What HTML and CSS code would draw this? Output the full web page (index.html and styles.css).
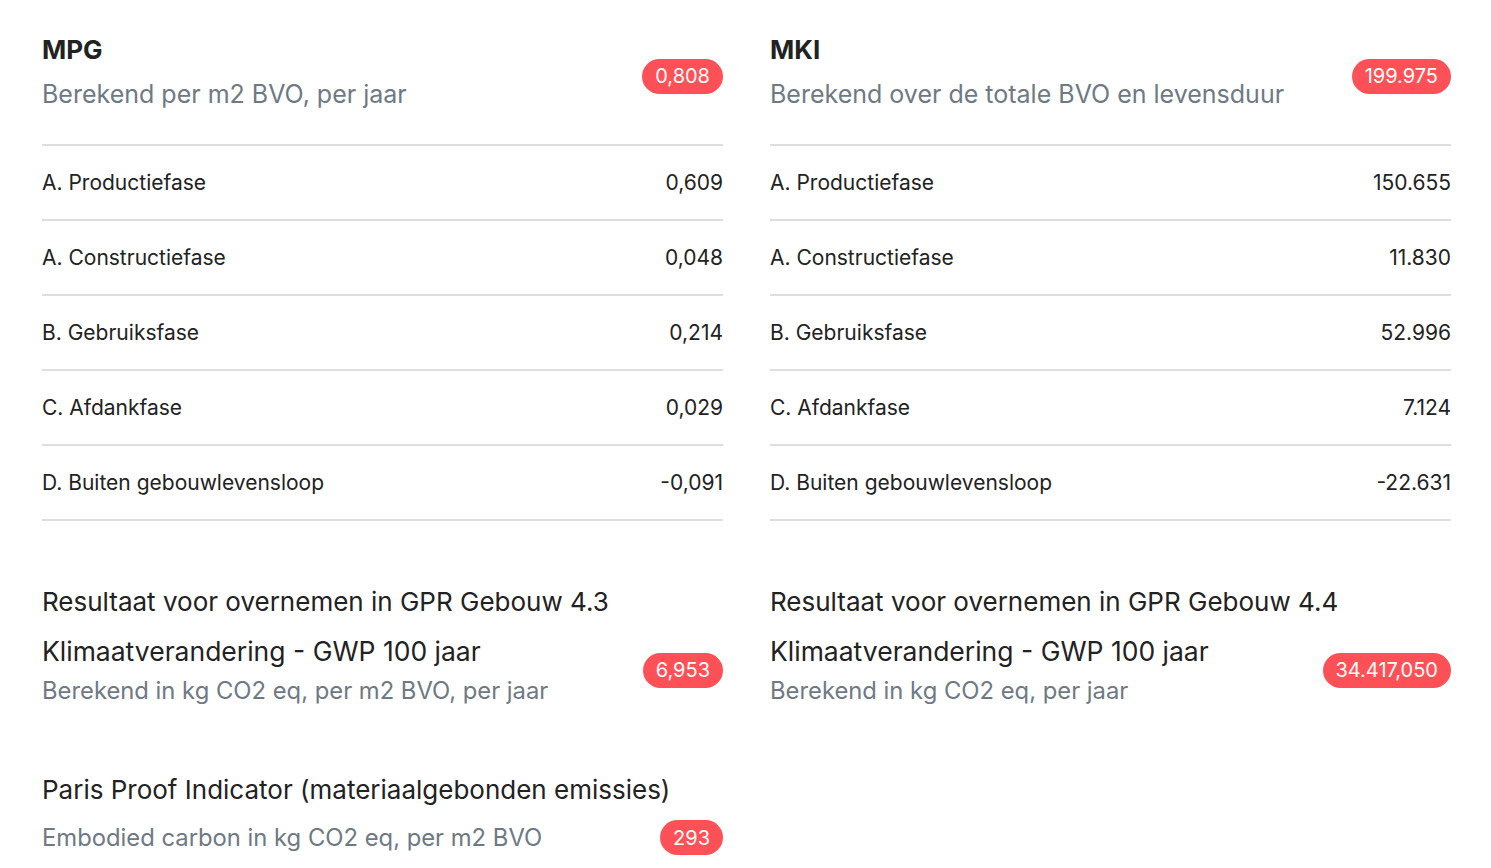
FILE: index.html
```html
<!DOCTYPE html>
<html lang="nl">
<head>
<meta charset="utf-8">
<title>MPG / MKI</title>
<link rel="stylesheet" href="styles.css">
</head>
<body>
<div class="page">
  <section class="col">
    <div class="head">
      <div class="head-text">
        <h2 class="title">MPG</h2>
        <p class="sub">Berekend per m2 BVO, per jaar</p>
      </div>
      <span class="badge">0,808</span>
    </div>
    <div class="table">
      <div class="row"><span>A. Productiefase</span><span>0,609</span></div>
      <div class="row"><span>A. Constructiefase</span><span>0,048</span></div>
      <div class="row"><span>B. Gebruiksfase</span><span>0,214</span></div>
      <div class="row"><span>C. Afdankfase</span><span>0,029</span></div>
      <div class="row"><span>D. Buiten gebouwlevensloop</span><span>-0,091</span></div>
    </div>
    <h3 class="sec-title">Resultaat voor overnemen in GPR Gebouw 4.3</h3>
    <div class="result">
      <div class="result-text">
        <div class="r-title">Klimaatverandering - GWP 100 jaar</div>
        <div class="r-sub">Berekend in kg CO2 eq, per m2 BVO, per jaar</div>
      </div>
      <span class="badge">6,953</span>
    </div>
    <div class="paris">
      <div class="r-title">Paris Proof Indicator (materiaalgebonden emissies)</div>
      <div class="paris-row">
        <div class="r-sub">Embodied carbon in kg CO2 eq, per m2 BVO</div>
        <span class="badge">293</span>
      </div>
    </div>
  </section>
  <section class="col">
    <div class="head">
      <div class="head-text">
        <h2 class="title">MKI</h2>
        <p class="sub">Berekend over de totale BVO en levensduur</p>
      </div>
      <span class="badge">199.975</span>
    </div>
    <div class="table">
      <div class="row"><span>A. Productiefase</span><span>150.655</span></div>
      <div class="row"><span>A. Constructiefase</span><span>11.830</span></div>
      <div class="row"><span>B. Gebruiksfase</span><span>52.996</span></div>
      <div class="row"><span>C. Afdankfase</span><span>7.124</span></div>
      <div class="row"><span>D. Buiten gebouwlevensloop</span><span>-22.631</span></div>
    </div>
    <h3 class="sec-title">Resultaat voor overnemen in GPR Gebouw 4.4</h3>
    <div class="result">
      <div class="result-text">
        <div class="r-title">Klimaatverandering - GWP 100 jaar</div>
        <div class="r-sub">Berekend in kg CO2 eq, per jaar</div>
      </div>
      <span class="badge">34.417,050</span>
    </div>
  </section>
</div>
</body>
</html>
```

FILE: styles.css
```css
* { box-sizing: border-box; }
html, body { margin: 0; padding: 0; background: #fff; }
body {
  font-family: Inter, "Noto Sans", sans-serif;
  color: #222;
}
.page {
  display: grid;
  grid-template-columns: 681px 681px;
  column-gap: 47px;
  padding: 34px 41px 0 42px;
}
.col { display: flex; flex-direction: column; }
.head {
  display: flex;
  align-items: center;
  justify-content: space-between;
  padding-bottom: 34px;
}
.title {
  margin: 0;
  font-size: 26px;
  line-height: 32px;
  font-weight: 700;
  color: #222;
}
.sub {
  margin: 12px 0 0;
  font-size: 25px;
  line-height: 32px;
  color: #6e7984;
}
.badge {
  display: inline-flex;
  align-items: center;
  justify-content: center;
  height: 35px;
  padding: 0 13px;
  border-radius: 18px;
  background: #fd5157;
  color: #fff;
  font-size: 20px;
  line-height: 1;
  white-space: nowrap;
  margin-top: 8px;
}
.table { border-top: 2px solid #dedede; }
.row {
  display: flex;
  justify-content: space-between;
  align-items: center;
  height: 75px;
  padding-bottom: 1px;
  border-bottom: 2px solid #dedede;
  font-size: 21px;
}
.sec-title {
  margin: 65px 0 0;
  font-size: 26px;
  line-height: 32px;
  font-weight: 400;
}
.result {
  display: flex;
  align-items: center;
  justify-content: space-between;
  margin-top: 17px;
}
.r-title {
  font-size: 26px;
  line-height: 32px;
}
.result .r-title { font-size: 26.5px; }
.r-sub {
  margin-top: 8px;
  font-size: 23.8px;
  line-height: 32px;
  color: #6e7984;
}
.result .badge { margin-top: -2px; }
.paris { margin-top: 67px; }
.paris-row {
  display: flex;
  align-items: center;
  justify-content: space-between;
  margin-top: 14px;
}
.paris-row .r-sub { margin-top: 0; }
.paris-row .badge { margin-top: 0; }
```
